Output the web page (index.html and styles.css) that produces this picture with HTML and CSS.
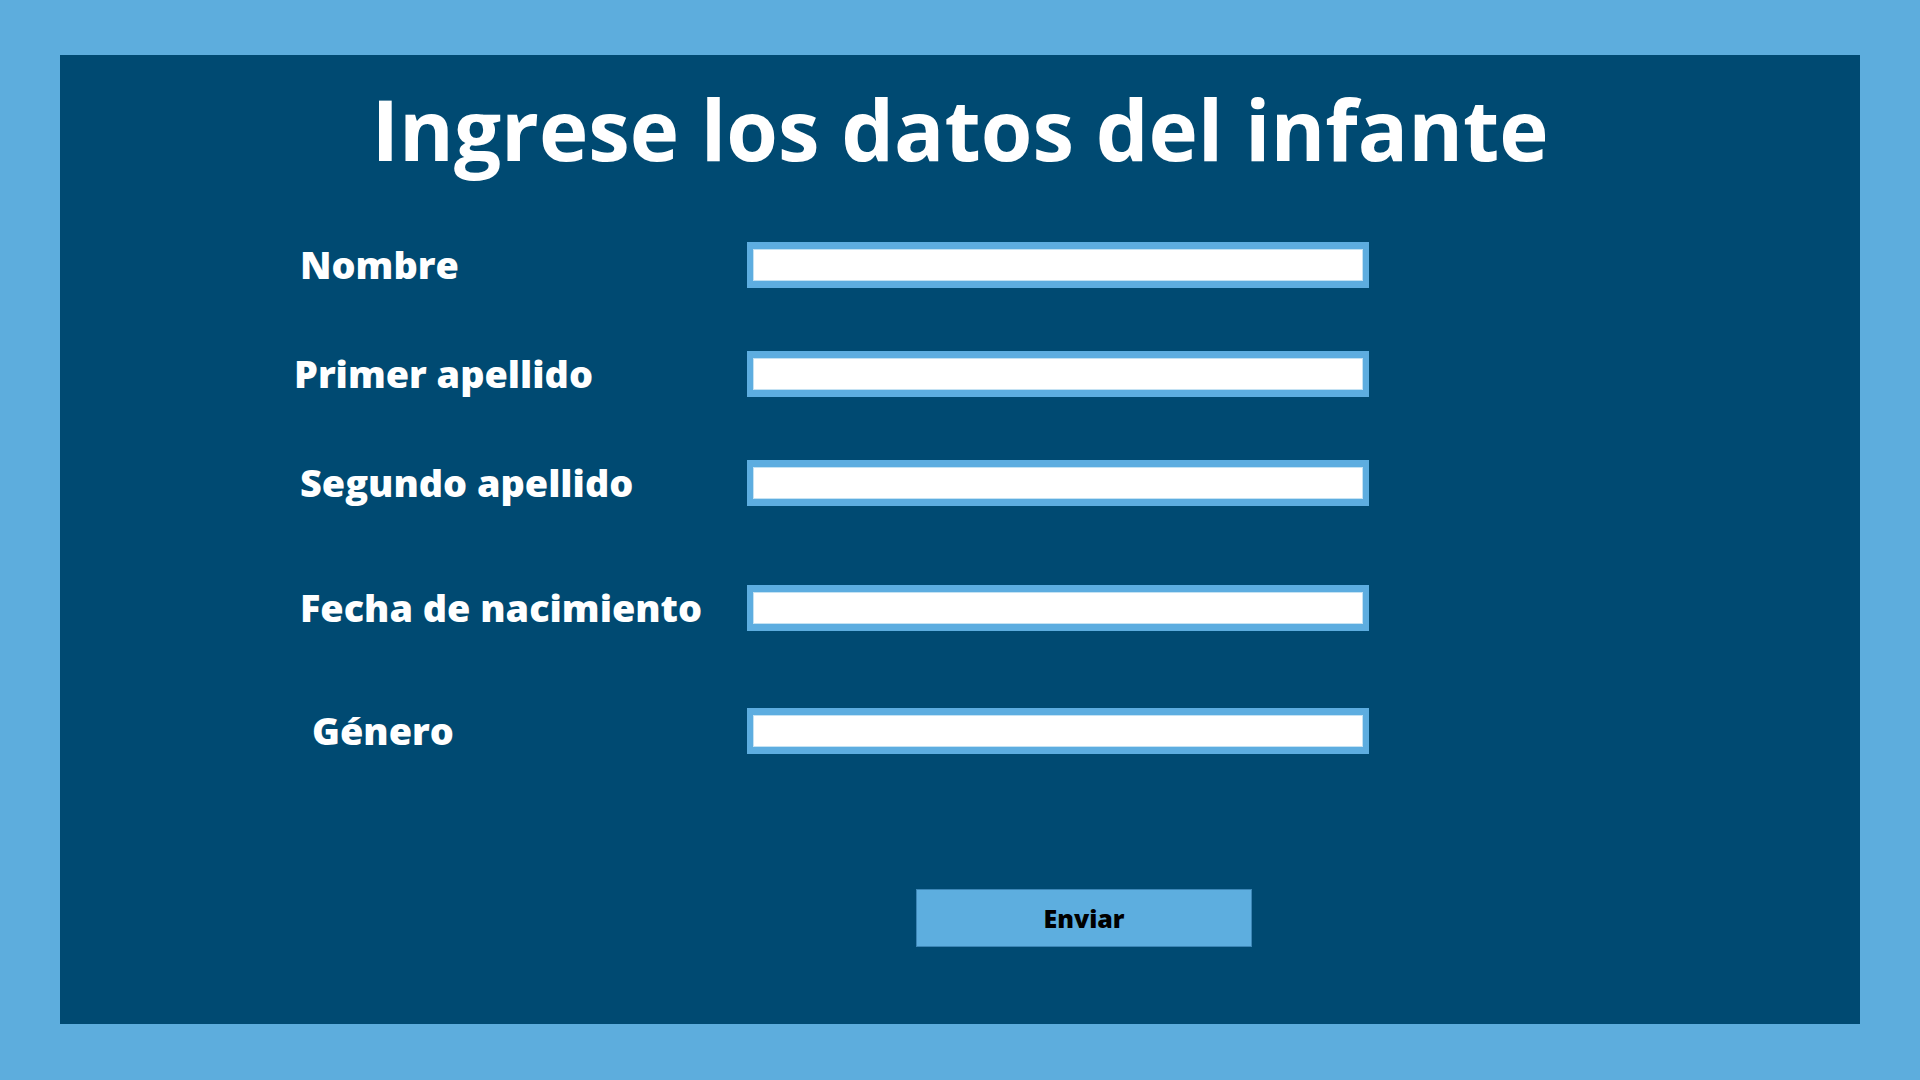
FILE: index.html
```html
<!DOCTYPE html>
<html lang="es">
<head>
<meta charset="utf-8">
<title>Datos del infante</title>
<link rel="stylesheet" href="styles.css">
</head>
<body>
<main class="panel">
  <h1 class="title">Ingrese los datos del infante</h1>
  <form class="form">
    <div class="row">
      <label class="label" for="nombre">Nombre</label>
      <input class="field" id="nombre" type="text">
    </div>
    <div class="row">
      <label class="label label--left" for="ap1">Primer apellido</label>
      <input class="field" id="ap1" type="text">
    </div>
    <div class="row">
      <label class="label" for="ap2">Segundo apellido</label>
      <input class="field" id="ap2" type="text">
    </div>
    <div class="row row--gap">
      <label class="label" for="fecha">Fecha de nacimiento</label>
      <input class="field" id="fecha" type="text">
    </div>
    <div class="row row--gap2">
      <label class="label label--right" for="genero">Género</label>
      <input class="field" id="genero" type="text">
    </div>
    <button class="submit" type="button">Enviar</button>
  </form>
</main>
</body>
</html>
```
FILE: styles.css
```css
html, body {
  margin: 0;
  padding: 0;
}
body {
  background: #5daddd;
  padding: 55px 60px 56px;
  font-family: "Open Sans", "Noto Sans", sans-serif;
  box-sizing: border-box;
  height: 1080px;
}
.panel {
  background: #004a72;
  height: 969px;
  display: flex;
  flex-direction: column;
}
.title {
  margin: 32px 0 0;
  font-size: 83.5px;
  line-height: 84px;
  font-weight: 700;
  color: #ffffff;
  text-align: center;
}
.form {
  display: flex;
  flex-direction: column;
  margin: 71px 0 0 240px;
}
.row {
  display: flex;
  align-items: center;
  height: 46px;
  margin-bottom: 63px;
}
.row--gap {
  margin-top: 16px;
}
.row--gap2 {
  margin-top: 14px;
  margin-bottom: 135px;
}
.label {
  width: 447px;
  flex: none;
  box-sizing: border-box;
  padding-left: 0;
  font-size: 37.8px;
  line-height: 46px;
  font-weight: 800;
  color: #ffffff;
}
.label--left {
  margin-left: -6px;
  width: 453px;
}
.label--right {
  padding-left: 12px;
}
.field {
  width: 622px;
  height: 46px;
  box-sizing: border-box;
  margin: 0;
  border-style: solid;
  border-color: #5dade0;
  border-width: 7px 6px;
  background: #ffffff;
  box-shadow: inset 0 0 0 1px #c4e2f3;
  outline: none;
  padding: 0 8px;
  font-family: inherit;
  font-size: 20px;
}
.submit {
  align-self: flex-start;
  margin: 0 0 0 616px;
  width: 336px;
  height: 58px;
  background: #5daedf;
  border: 1px solid #3c86b6;
  color: #000000;
  font-family: inherit;
  font-size: 25px;
  font-weight: 800;
  padding: 0;
}
```
